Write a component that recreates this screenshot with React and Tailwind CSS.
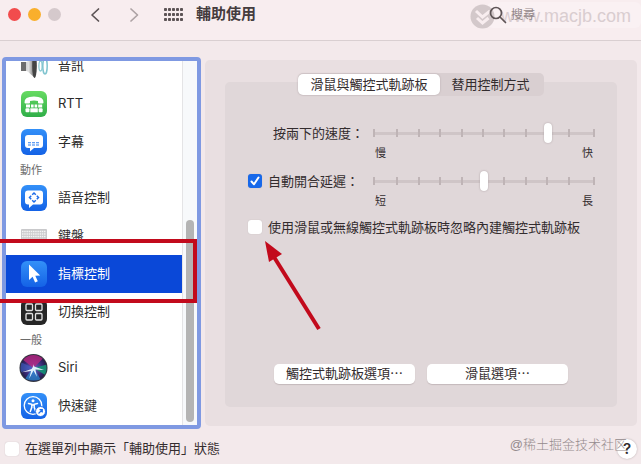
import { useState } from "react";

const RED = "#c20a1c";

function SpeakerIcon() {
  return (
    <svg width="28" height="28" viewBox="0 0 28 28" aria-hidden="true">
      <defs>
        <linearGradient id="cone" x1="0" x2="1">
          <stop offset="0" stopColor="#b9b9b9" />
          <stop offset="0.5" stopColor="#e2e2e2" />
          <stop offset="1" stopColor="#4c4c4c" />
        </linearGradient>
      </defs>
      <path d="M1 10h6L15 2q2.500 11 0 24L7 19H1z" fill="url(#cone)" />
      <path d="M1 10h5v9H1z" fill="#6d6d6d" />
      <ellipse cx="14.500" cy="14" rx="2.300" ry="12" fill="#444" />
      <ellipse cx="20.500" cy="14" rx="1.600" ry="5" fill="none" stroke="#8ccbd4" strokeWidth="1.300" />
      <ellipse cx="25" cy="14" rx="2.200" ry="8" fill="none" stroke="#7fc4cf" strokeWidth="1.500" />
    </svg>
  );
}

function RttIcon() {
  return (
    <svg width="28" height="28" viewBox="0 0 28 28" aria-hidden="true">
      <defs>
        <linearGradient id="green" x1="0" x2="0" y1="0" y2="1">
          <stop offset="0" stopColor="#67db62" />
          <stop offset="1" stopColor="#2fae48" />
        </linearGradient>
      </defs>
      <rect x="1" y="1" width="26" height="26" rx="6" fill="url(#green)" />
      <path d="M4.500 12.500q-.5-6 9.500-6t9.500 6q0 1-1.200 1h-3.300q-1 0-1-1v-1.500q-4-1.200-8 0v1.500q0 1-1 1H5.700q-1.200 0-1.200-1z" fill="#fff" />
      <g fill="#fff">
        <rect x="6" y="14.500" width="4" height="3" />
        <rect x="11" y="14.500" width="2.600" height="3" />
        <rect x="14.600" y="14.500" width="2.600" height="3" />
        <rect x="18.200" y="14.500" width="4" height="3" />
        <rect x="5.500" y="18.300" width="4" height="4" rx="1" />
        <rect x="10.300" y="18.300" width="7.500" height="4" />
        <rect x="18.600" y="18.300" width="4" height="4" rx="1" />
      </g>
    </svg>
  );
}

function BlueTile({ children }) {
  return (
    <svg width="28" height="28" viewBox="0 0 28 28" aria-hidden="true">
      <defs>
        <linearGradient id="blue" x1="0" x2="0" y1="0" y2="1">
          <stop offset="0" stopColor="#3390f8" />
          <stop offset="1" stopColor="#1462e6" />
        </linearGradient>
      </defs>
      <rect x="1" y="1" width="26" height="26" rx="6" fill="url(#blue)" />
      {children}
    </svg>
  );
}

function CaptionsIcon() {
  return (
    <BlueTile>
      <path d="M8 7h12q3 0 3 3v7q0 3-3 3h-6l-4 3.500V20H8q-3 0-3-3v-7q0-3 3-3z" fill="#fff" />
      <path d="M8 14.800h12M8 17h12" stroke="#2f7fee" strokeWidth="1.100" strokeDasharray="3 1" />
    </BlueTile>
  );
}

function VoiceIcon() {
  return (
    <BlueTile>
      <path d="M8 6.500h12q3 0 3 3v8q0 3-3 3h-7l-4 3.500v-3.500H8q-3 0-3-3v-8q0-3 3-3z" fill="#fff" />
      <path
        d="M12.200 10.700L14 9l1.800 1.700M12.200 16.300L14 18l1.800-1.700M11.200 11.700L9.500 13.500l1.700 1.800M16.800 11.700l1.700 1.800-1.700 1.800"
        fill="none"
        stroke="#1e6ce8"
        strokeWidth="1.500"
      />
    </BlueTile>
  );
}

function KeyboardIcon() {
  return (
    <svg width="28" height="28" viewBox="0 0 28 28" aria-hidden="true">
      <rect x="1" y="7" width="26" height="13" rx="1" fill="#c9c9cb" />
      <path d="M2 9.500h24M2 12h24M2 14.500h24M2 17.500h24" stroke="#f4f4f4" strokeWidth="1.500" strokeDasharray="1.500 0.700" />
    </svg>
  );
}

function PointerIcon() {
  return (
    <BlueTile>
      <path d="M9 4.500v15.500l3.600-3.200 2.500 5.700 2.700-1.200-2.500-5.500 4.900-.4z" fill="#fff" />
    </BlueTile>
  );
}

function SwitchIcon() {
  return (
    <svg width="28" height="28" viewBox="0 0 28 28" aria-hidden="true">
      <rect x="1" y="1" width="26" height="26" rx="6" fill="#262626" />
      <g fill="none" stroke="#e4e4e4" strokeWidth="1.300">
        <rect x="6" y="6" width="6.500" height="6.500" rx="1" />
        <rect x="15.500" y="6" width="6.500" height="6.500" rx="1" />
        <rect x="6" y="15.500" width="6.500" height="6.500" rx="1" />
        <rect x="15.500" y="15.500" width="6.500" height="6.500" rx="1" />
      </g>
    </svg>
  );
}

function SiriIcon() {
  return (
    <svg width="30" height="30" viewBox="0 0 30 30" aria-hidden="true">
      <defs>
        <radialGradient id="orb" cx="0.500" cy="0.500" r="0.500">
          <stop offset="0" stopColor="#6d64c8" />
          <stop offset="0.700" stopColor="#33256b" />
          <stop offset="1" stopColor="#1d1b35" />
        </radialGradient>
        <clipPath id="orbClip">
          <circle cx="15" cy="15" r="13.500" />
        </clipPath>
      </defs>
      <circle cx="15" cy="15" r="14.500" fill="#34363f" />
      <g clipPath="url(#orbClip)">
        <rect width="30" height="30" fill="url(#orb)" />
        <path d="M15 15L2 5Q14-4 26 4z" fill="#b8267f" opacity="0.800" />
        <path d="M15 15L0 8v12z" fill="#3f63c8" opacity="0.600" />
        <path d="M15 15L30 11v13z" fill="#139a78" opacity="0.850" />
        <path d="M15 14L5 28h18z" fill="#2b8fd8" opacity="0.700" />
        <path d="M14.500 11q.5 3-1.500 5L3 19.500l9.500-1.500-2 8 4.500-8.500 3.500 6.500-1.500-7.500 9 .5-9-3q-2-.5-2.500-3z" fill="#e8f6ff" opacity="0.950" />
      </g>
    </svg>
  );
}

function ShortcutIcon() {
  return (
    <BlueTile>
      <circle cx="13" cy="13.500" r="8.800" fill="none" stroke="#fff" strokeWidth="1.300" />
      <circle cx="13" cy="8.800" r="1.500" fill="#fff" />
      <path d="M8.500 11.500l3.300.8v3l-1.500 4.200M17.500 11.500l-3.300.8v3l1.500 4.200M11.800 13h2.400" fill="none" stroke="#fff" strokeWidth="1.500" strokeLinecap="round" />
      <circle cx="20.500" cy="19.500" r="5" fill="#fff" stroke="#1f6fec" />
      <path d="M18.500 21.500l3.500-3.500M19.500 17.700h2.800v2.800" fill="none" stroke="#1f6fec" strokeWidth="1.200" />
    </BlueTile>
  );
}

const ITEMS = [
  { label: "音訊", icon: SpeakerIcon },
  { label: "RTT", icon: RttIcon },
  { label: "字幕", icon: CaptionsIcon },
  { heading: "動作" },
  { label: "語音控制", icon: VoiceIcon },
  { label: "鍵盤", icon: KeyboardIcon },
  { label: "指標控制", icon: PointerIcon },
  { label: "切換控制", icon: SwitchIcon },
  { heading: "一般" },
  { label: "Siri", icon: SiriIcon },
  { label: "快速鍵", icon: ShortcutIcon },
];

function Toolbar() {
  return (
    <header className="flex h-[41px] shrink-0 items-start border-b border-[#d9cfd1] bg-[#f8edef]">
      <div className="flex h-[29px] flex-1 items-center pl-2">
        <div className="flex gap-[7px]">
          <button aria-label="關閉" className="size-[13px] rounded-full bg-[#f24c4d]" />
          <button aria-label="縮到最小" className="size-[13px] rounded-full bg-[#f9af2c]" />
          <button aria-label="縮放" className="size-[13px] rounded-full bg-[#d5c9cc]" />
        </div>
        <div className="ml-7 flex gap-6">
          <button aria-label="上一頁">
            <svg width="14" height="16" viewBox="0 0 14 16" fill="none" stroke="#5c5355" strokeWidth="1.700" strokeLinecap="round" strokeLinejoin="round">
              <path d="M9.500 2L3 8l6.500 6" />
            </svg>
          </button>
          <button aria-label="下一頁">
            <svg width="14" height="16" viewBox="0 0 14 16" fill="none" stroke="#ada2a4" strokeWidth="1.700" strokeLinecap="round" strokeLinejoin="round">
              <path d="M4 2l6.500 6L4 14" />
            </svg>
          </button>
        </div>
        <button aria-label="顯示全部" className="ml-[22px]">
          <svg width="20" height="16" viewBox="0 0 20 16" fill="#5c5355">
            {[1, 6, 11].map((y) => [1, 5, 9, 13, 17].map((x) => <rect key={`${x}-${y}`} x={x} y={y} width="3" height="3" rx="0.800" />))}
          </svg>
        </button>
        <h1 className="ml-[13px] text-[15px] font-bold text-[#453c3e]">輔助使用</h1>
      </div>
      <label className="relative mt-[2px] flex h-[26px] w-[154px] items-center gap-1 rounded-md bg-[#faf1f3] pl-[2px]">
        <svg width="18" height="18" viewBox="0 0 18 18" fill="none" stroke="#5f5557" strokeWidth="1.700" strokeLinecap="round" className="relative z-10 shrink-0">
          <circle cx="7" cy="7" r="5.500" />
          <path d="M11 11l5.500 5.500" />
        </svg>
        <input
          type="search"
          placeholder="搜尋"
          aria-label="搜尋"
          className="relative z-10 w-full min-w-0 bg-transparent text-[12px] outline-none placeholder:text-[#93888a]"
        />
        <span className="pointer-events-none absolute right-[10px] top-0 flex items-center gap-[6px] font-['Liberation_Sans',sans-serif] text-[18px] leading-[28px] text-[#d9cdd0]">
          <svg width="25" height="25" viewBox="0 0 25 25">
            <circle cx="12.500" cy="12.500" r="12" fill="#d3c8ca" />
            <path d="M6 7l6.500 6L20 7M7 14l5.500 5 6-5" fill="none" stroke="#f8edef" strokeWidth="3" />
          </svg>
          www.macjb.com
        </span>
      </label>
    </header>
  );
}

function Sidebar({ selected, onSelect }) {
  return (
    <nav className="flex w-[199px] shrink-0 rounded-[4px] border-4 border-[#7f99e2] bg-white">
      <div className="flex min-h-0 flex-1 flex-col justify-end overflow-hidden">
        {ITEMS.map(({ label, heading, icon: Icon }) =>
          heading ? (
            <h2 key={heading} className="h-[18px] shrink-0 pl-[14px] text-[11px] leading-[18px] text-[#6b6b6b]">
              {heading}
            </h2>
          ) : (
            <button
              key={label}
              onClick={() => onSelect(label)}
              className={`flex h-[38px] shrink-0 items-center gap-[10px] pl-[13px] text-left text-[13px] ${
                selected === label ? "bg-[#0a48d8] text-white" : "text-[#2b2b2b]"
              }`}
            >
              <span className="flex w-[29px] justify-center">
                <Icon />
              </span>
              {label}
            </button>
          )
        )}
      </div>
      <div className="flex w-[15px] flex-col justify-end border-l border-[#e4e4e6] bg-[#f7f9fb] pb-[3px] pl-[3px]">
        <div className="h-[202px] w-2 rounded-full bg-[#b4b4b4]" />
      </div>
    </nav>
  );
}

function CheckBox({ id, checked, onChange }) {
  return (
    <span className="relative flex size-[14px] shrink-0">
      <input
        id={id}
        type="checkbox"
        checked={checked}
        onChange={onChange}
        className="size-[14px] appearance-none rounded-[3px] bg-white shadow-[0_0_1px_#b5a9ab] checked:bg-[#1768ea]"
      />
      {checked && (
        <svg viewBox="0 0 14 14" className="pointer-events-none absolute inset-0" fill="none" stroke="#fff" strokeWidth="2" strokeLinecap="round" strokeLinejoin="round">
          <path d="M3.500 7.500L6 10.300l4.500-6.800" />
        </svg>
      )}
    </span>
  );
}

function TickSlider({ label, initial, min, max }) {
  const [value, setValue] = useState(initial);
  return (
    <div className="flex-1">
      <div className="relative flex h-5 items-center">
        <div className="absolute inset-x-0 h-[3px] bg-[#cfc5c7]" />
        <div className="absolute inset-x-0 h-2 border-x-2 border-[#bfb4b6] px-[2px]">
          <div className="grid h-full grid-cols-10 divide-x-2 divide-[#bfb4b6]">
            {Array.from({ length: 10 }, (_, i) => (
              <span key={i} />
            ))}
          </div>
        </div>
        <input
          type="range"
          aria-label={label}
          min="0"
          max="10"
          value={value}
          onChange={(e) => setValue(Number(e.target.value))}
          className="relative h-5 w-full appearance-none bg-transparent [&::-webkit-slider-thumb]:h-5 [&::-webkit-slider-thumb]:w-2 [&::-webkit-slider-thumb]:appearance-none [&::-webkit-slider-thumb]:rounded-full [&::-webkit-slider-thumb]:bg-white [&::-webkit-slider-thumb]:shadow-[0_0_2px_#a99ea0]"
        />
      </div>
      <div className="flex justify-between px-[2px] text-[11px] leading-5">
        <span>{min}</span>
        <span>{max}</span>
      </div>
    </div>
  );
}

function Panel() {
  const [autoSpring, setAutoSpring] = useState(true);
  const [ignoreTrackpad, setIgnoreTrackpad] = useState(false);
  const [tab, setTab] = useState(0);

  return (
    <main className="my-[3px] flex flex-1 flex-col rounded-[5px] bg-[#e9dfe1] px-5 pb-[19px] pt-[13px]">
      <div className="z-10 -mb-[14px] flex self-center rounded-[5px] bg-[#d9cfd1] pr-[2px]">
        {["滑鼠與觸控式軌跡板", "替用控制方式"].map((name, i) => (
          <button
            key={name}
            onClick={() => setTab(i)}
            className={`my-px h-[21px] rounded-[5px] px-3 text-[13px] ${tab === i ? "bg-white shadow-[0_0_2px_#b3a8aa]" : ""}`}
          >
            {name}
          </button>
        ))}
      </div>
      <section className="flex flex-1 flex-col rounded-[5px] bg-[#e0d7d9] pb-[23px] pl-[23px] pr-[22px] pt-[41px] text-[13px]">
        <div className="flex items-start">
          <span className="w-[125px] pr-[9px] text-right leading-5">按兩下的速度：</span>
          <TickSlider label="按兩下的速度" initial={8} min="慢" max="快" />
        </div>
        <div className="mt-2 flex items-start">
          <div className="flex w-[125px] items-center gap-[6px]">
            <CheckBox id="spring" checked={autoSpring} onChange={() => setAutoSpring((v) => !v)} />
            <label htmlFor="spring" className="leading-5">
              自動開合延遲：
            </label>
          </div>
          <TickSlider label="自動開合延遲" initial={5} min="短" max="長" />
        </div>
        <div className="mt-[6px] flex items-center gap-[6px]">
          <CheckBox id="ignore" checked={ignoreTrackpad} onChange={() => setIgnoreTrackpad((v) => !v)} />
          <label htmlFor="ignore" className="leading-5">
            使用滑鼠或無線觸控式軌跡板時忽略內建觸控式軌跡板
          </label>
        </div>
        <div className="mt-auto flex justify-end gap-3 pr-[27px]">
          <button className="h-5 w-[141px] rounded-[5px] bg-white shadow-[0_1px_1px_#c4b9bb]">觸控式軌跡板選項⋯</button>
          <button className="h-5 w-[141px] rounded-[5px] bg-white shadow-[0_1px_1px_#c4b9bb]">滑鼠選項⋯</button>
        </div>
      </section>
    </main>
  );
}

function Annotations() {
  return (
    <div className="pointer-events-none" aria-hidden="true">
      <div className="absolute left-0 top-[239px] z-20 h-[64px] w-[197px] border-4 border-l-0 border-[#c20a1c]" />
      <svg className="absolute left-[260px] top-[236px] z-20" width="66" height="98" viewBox="0 0 66 98">
        <path d="M59 93L14 21" stroke={RED} strokeWidth="4" />
        <path d="M5 5l17 13-13 8z" fill={RED} />
      </svg>
    </div>
  );
}

export default function App() {
  const [selected, setSelected] = useState("指標控制");
  const [showStatus, setShowStatus] = useState(false);

  return (
    <div
      lang="zh-Hant"
      className="relative flex h-screen flex-col overflow-hidden bg-[#f3e9eb] font-[Inter,'Noto_Sans_CJK_TC',sans-serif] text-[#332c2e]"
    >
      <Toolbar />
      <div className="flex min-h-0 flex-1 gap-1 pl-[2px] pr-1 pt-4">
        <Sidebar selected={selected} onSelect={setSelected} />
        <Panel />
      </div>
      <footer className="flex h-[35px] shrink-0 items-center pl-[5px] pr-1 pt-[5px]">
        <CheckBox id="status" checked={showStatus} onChange={() => setShowStatus((v) => !v)} />
        <label htmlFor="status" className="ml-[6px] flex-1 text-[13px]">
          在選單列中顯示「輔助使用」狀態
        </label>
        <div className="relative">
          <button aria-label="輔助說明" className="flex size-5 items-center justify-center rounded-full bg-white text-[15px] font-semibold shadow-[0_0_2px_#b3a8aa]">
            ?
          </button>
          <span className="absolute -top-1 right-[10px] whitespace-nowrap font-['Liberation_Sans','Noto_Sans_CJK_SC',sans-serif] text-[13px] font-light text-[#958b8d]">
            @稀土掘金技术社区
          </span>
        </div>
      </footer>
      <Annotations />
    </div>
  );
}
